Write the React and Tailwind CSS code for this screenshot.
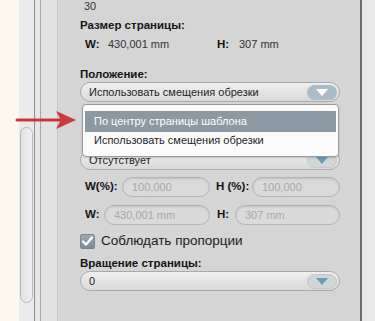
import React from 'react';

const font = { fontFamily: '"Liberation Sans", Arial, sans-serif' };

const Arrow = ({ active }) => (
    <span
        className={`flex items-center justify-center w-[30px] h-[15px] rounded-full ${active ? 'bg-[#a9bcc7]' : 'bg-[#d0d5d8] border border-[#c4c9cc]'}`}
    >
        <svg width="12" height="7" viewBox="0 0 12 7">
            <path d="M0 0 L12 0 L6 7 Z" fill={active ? '#ffffff' : '#6a9bbb'} />
        </svg>
    </span>
);

const Select = ({ value, active }) => (
    <div className="flex items-center h-[20px] w-[260px] rounded-full border border-[#a9a9a9] bg-gradient-to-b from-[#efefef] to-[#d9d9d9] pl-[8px] pr-[2px]">
        <span className="flex-1 text-[11px] text-[#1e1e1e] leading-none">{value}</span>
        <Arrow active={active} />
    </div>
);

const Field = ({ label, value, labelW, inputW, pad = 'pl-[5px]' }) => (
    <div className="flex items-center">
        <span className={`${labelW} ${pad} whitespace-nowrap text-[11.5px] font-bold text-[#141414]`}>{label}</span>
        <div className={`${inputW} h-[20px] flex items-center rounded-full border border-[#b3b3b3] bg-[#dadada] shadow-[inset_0_1px_2px_rgba(0,0,0,0.12)] pl-[9px]`}>
            <span className="text-[11px] text-[#a8a8a8] leading-none whitespace-nowrap">{value}</span>
        </div>
    </div>
);

export default function App() {
    return (
        <div className="relative flex w-[375px] h-[321px] overflow-hidden bg-[#fcf8ef]" style={font}>
            {/* left cream area */}
            <div className="w-[19px] shrink-0" />

            {/* scrollbar */}
            <div className="w-[16px] shrink-0 bg-[#ebebeb] border-r border-[#8f8f8f] pt-[127px] pl-[1px]">
                <div className="w-[13px] h-[176px] rounded-full border border-[#b8b8b8] bg-gradient-to-r from-[#e2e2e2] to-[#f0f0f0]" />
            </div>
            <div className="w-[6px] shrink-0 bg-[#e6e6e6] border-r border-[#a8a8a8]" />
            <div className="w-[17px] shrink-0 bg-[#e2e2e2] border-r border-[#c6c6c6]" />

            {/* panel */}
            <div className="w-[304px] shrink-0 bg-[#d5d5d5] border-r-2 border-[#6e6e6e] pl-[22px] text-[11px]">
                <div className="mt-[-2px] h-[16px] leading-[16px] text-[#333] pl-[4px]">30</div>

                <div className="mt-[3px] h-[16px] leading-[16px] text-[11.5px] font-bold text-[#141414]">Размер страницы:</div>
                <div className="mt-[3px] h-[16px] flex items-center leading-[16px]">
                    <span className="w-[28px] pl-[5px] text-[11.5px] font-bold text-[#141414]">W:</span>
                    <span className="w-[109px] text-[#333]">430,001 mm</span>
                    <span className="w-[22px] text-[11.5px] font-bold text-[#141414]">H:</span>
                    <span className="text-[#333]">307 mm</span>
                </div>

                <div className="mt-[14px] h-[16px] leading-[16px] text-[11.5px] font-bold text-[#141414]">Положение:</div>
                <Select value="Использовать смещения обрезки" active />

                <div className="mt-[48px]">
                    <Select value="Отсутствует" />
                </div>

                <div className="mt-[7px] flex items-center gap-[6px]">
                    <Field label="W(%):" value="100,000" labelW="w-[42px]" inputW="w-[88px]" />
                    <Field label="H (%):" value="100,000" labelW="w-[36px]" inputW="w-[88px]" pad="pl-0" />
                </div>
                <div className="mt-[8px] flex items-center gap-[6px]">
                    <Field label="W:" value="430,001 mm" labelW="w-[24px]" inputW="w-[106px]" />
                    <Field label="H:" value="307 mm" labelW="w-[19px]" inputW="w-[105px]" pad="pl-[1px]" />
                </div>

                <div className="mt-[8px] h-[16px] flex items-center gap-[6px]">
                    <span className="flex items-center justify-center w-[15px] h-[15px] rounded-[2px] border border-[#7a8893] bg-gradient-to-b from-[#9aa9b4] to-[#7d8c98]">
                        <svg width="11" height="10" viewBox="0 0 11 10">
                            <path d="M1 5.5 L4 8.5 L10 1.5" fill="none" stroke="#ffffff" strokeWidth="2.2" strokeLinecap="round" strokeLinejoin="round" />
                        </svg>
                    </span>
                    <span className="text-[13.5px] text-[#1a1a1a] leading-[16px]">Соблюдать пропорции</span>
                </div>

                <div className="mt-[6px] h-[16px] leading-[16px] text-[11.5px] font-bold text-[#141414]">Вращение страницы:</div>
                <Select value="0" />
            </div>

            {/* right strip */}
            <div className="flex-1 bg-[#e8e8e8]" />

            {/* open list */}
            <div className="absolute left-[82px] top-[104px] w-[257px] h-[53px] rounded-[4px] border border-[#9a9a9a] bg-[#fbfbfb] shadow-[0_1px_2px_rgba(0,0,0,0.15)] px-[2px] pt-[6px] text-[11px]">
                <div className="h-[21px] flex items-center bg-[#8c98a2] pl-[9px] text-white">По центру страницы шаблона</div>
                <div className="h-[16px] flex items-center pl-[9px] text-[#1e1e1e]">Использовать смещения обрезки</div>
            </div>

            {/* red pointer */}
            <svg className="absolute left-[15px] top-[109px]" width="62" height="22" viewBox="0 0 62 22">
                <path d="M2 11 L46 11" stroke="#c8393b" strokeWidth="3" strokeLinecap="round" />
                <path d="M41 2 L61 11 L41 20 L46 11 Z" fill="#c8393b" />
            </svg>
        </div>
    );
}
